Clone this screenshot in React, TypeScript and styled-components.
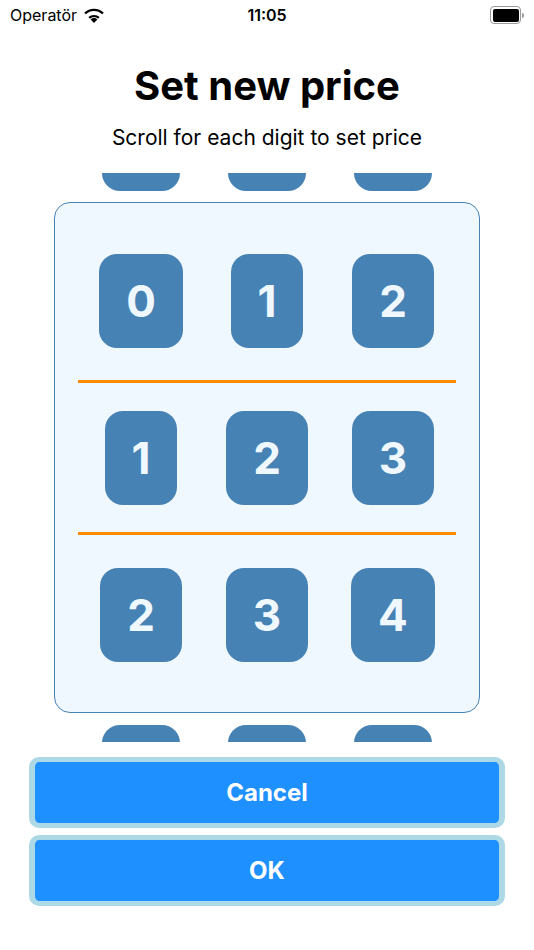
import styled, { createGlobalStyle } from "styled-components";

const GlobalStyle = createGlobalStyle`
  html, body {
    margin: 0;
    padding: 0;
    background: #ffffff;
  }
  body {
    font-family: Inter, "Noto Sans", "Liberation Sans", sans-serif;
    color: #000000;
  }
`;

const Screen = styled.div`
  width: 534px;
  height: 950px;
  display: flex;
  flex-direction: column;
  overflow: hidden;
`;

const StatusBar = styled.div`
  height: 30px;
  display: grid;
  grid-template-columns: 1fr auto 1fr;
  align-items: center;
  padding: 0 10px 0 10px;
  font-size: 16px;
`;

const Carrier = styled.div`
  display: flex;
  align-items: center;
  gap: 6px;
`;

const Clock = styled.div`
  font-weight: 600;
`;

const BatteryWrap = styled.div`
  justify-self: end;
  display: flex;
  align-items: center;
  gap: 1px;
`;

const BatteryBody = styled.div`
  width: 26px;
  height: 13px;
  border: 1.5px solid #9a9a9a;
  border-radius: 4px;
  padding: 1.5px;
  box-sizing: content-box;
  display: flex;
`;

const BatteryFill = styled.div`
  flex: 1;
  background: #000000;
  border-radius: 2px;
`;

const BatteryNub = styled.div`
  width: 2px;
  height: 5px;
  background: #9a9a9a;
  border-radius: 0 2px 2px 0;
`;

const Title = styled.h1`
  margin: 32px 0 0;
  text-align: center;
  font-size: 40px;
  line-height: 48px;
  font-weight: 700;
`;

const Subtitle = styled.p`
  margin: 15px 0 0;
  text-align: center;
  font-size: 21px;
  line-height: 26px;
`;

const Picker = styled.div`
  position: relative;
  margin-top: 22px;
  height: 569px;
  overflow: hidden;
`;

const Frame = styled.div`
  position: absolute;
  top: 29px;
  bottom: 29px;
  left: 54px;
  right: 54px;
  border: 1px solid #4682b4;
  border-radius: 16px;
  background: #f0f8ff;
  padding: 27px 23px;
  display: flex;
  flex-direction: column;
`;

const Slot = styled.div`
  flex: 1;
`;

const Divider = styled.div`
  height: 3px;
  background: #ff8c00;
`;

const Reels = styled.div`
  position: relative;
  margin: -76px 78px 0;
  display: grid;
  grid-template-columns: repeat(3, 1fr);
`;

const Reel = styled.div`
  display: flex;
  flex-direction: column;
  align-items: center;
  gap: 63px;
`;

const Tile = styled.div<{ $peek?: boolean }>`
  height: 94px;
  min-width: ${(p) => (p.$peek ? "78px" : "0")};
  box-sizing: border-box;
  padding: 0 27px;
  border-radius: 18px;
  background: #4682b4;
  color: #f0f8ff;
  font-size: 44px;
  font-weight: 700;
  display: flex;
  align-items: center;
  justify-content: center;
`;

const Actions = styled.div`
  margin: 15px 29px 0;
  display: flex;
  flex-direction: column;
  gap: 7px;
`;

const ActionButton = styled.button`
  height: 71px;
  border: 5px solid #add8e6;
  border-left-width: 6px;
  border-right-width: 6px;
  border-radius: 10px;
  background: #1e90ff;
  color: #ffffff;
  font-family: Inter, "Noto Sans", "Liberation Sans", sans-serif;
  font-size: 24px;
  font-weight: 700;
  cursor: pointer;
`;

const WifiIcon = () => (
  <svg width="22" height="15" viewBox="0 0 22 15">
    <path d="M11 15 L7.6 11.4 A5 5 0 0 1 14.4 11.4 Z" fill="#000" />
    <path d="M5.4 9.1 A8.2 8.2 0 0 1 16.6 9.1 L15.1 10.7 A6 6 0 0 0 6.9 10.7 Z" fill="#000" />
    <path d="M1.2 4.7 A14 14 0 0 1 20.8 4.7 L19.2 6.3 A11.7 11.7 0 0 0 2.8 6.3 Z" fill="#000" />
  </svg>
);

// visible digits per reel; one clipped tile peeks above and below each reel
const reels = [
  ["0", "1", "2"],
  ["1", "2", "3"],
  ["2", "3", "4"],
];

export default function App() {
  return (
    <>
      <GlobalStyle />
      <Screen>
        <StatusBar>
          <Carrier>
            Operatör
            <WifiIcon />
          </Carrier>
          <Clock>11:05</Clock>
          <BatteryWrap>
            <BatteryBody>
              <BatteryFill />
            </BatteryBody>
            <BatteryNub />
          </BatteryWrap>
        </StatusBar>
        <Title>Set new price</Title>
        <Subtitle>Scroll for each digit to set price</Subtitle>
        <Picker>
          <Frame>
            <Slot />
            <Divider />
            <Slot />
            <Divider />
            <Slot />
          </Frame>
          <Reels>
            {reels.map((digits, i) => (
              <Reel key={i}>
                <Tile $peek aria-hidden />
                {digits.map((d, j) => (
                  <Tile key={j}>{d}</Tile>
                ))}
                <Tile $peek aria-hidden />
              </Reel>
            ))}
          </Reels>
        </Picker>
        <Actions>
          <ActionButton>Cancel</ActionButton>
          <ActionButton>OK</ActionButton>
        </Actions>
      </Screen>
    </>
  );
}
